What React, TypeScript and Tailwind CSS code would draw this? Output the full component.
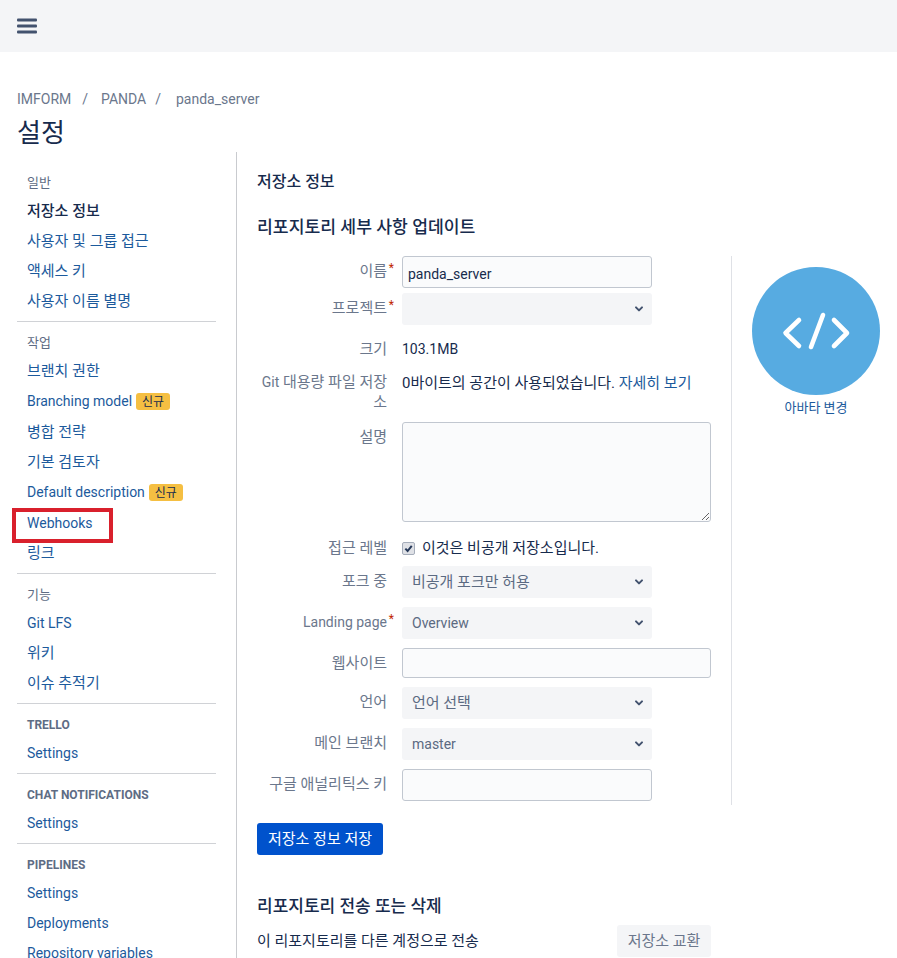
import type { ReactNode } from "react"

const sidebar = [
  { label: "일반", items: [{ name: "저장소 정보", active: true }, { name: "사용자 및 그룹 접근" }, { name: "액세스 키" }, { name: "사용자 이름 별명" }] },
  { label: "작업", items: [{ name: "브랜치 권한" }, { name: "Branching model", badge: true }, { name: "병합 전략" }, { name: "기본 검토자" }, { name: "Default description", badge: true }, { name: "Webhooks", marked: true }, { name: "링크" }] },
  { label: "기능", items: [{ name: "Git LFS" }, { name: "위키" }, { name: "이슈 추적기" }] },
  { label: "TRELLO", caps: true, items: [{ name: "Settings" }] },
  { label: "CHAT NOTIFICATIONS", caps: true, items: [{ name: "Settings" }] },
  { label: "PIPELINES", caps: true, items: [{ name: "Settings" }, { name: "Deployments" }, { name: "Repository variables" }] },
]

const isKorean = (s: string) => /[가-힣]/.test(s)

function Sidebar() {
  return (
    <nav className="w-[199px] pt-[20px] shrink-0">
      {sidebar.map((group: any, i) => (
        <div key={group.label} className={i > 0 ? "border-t border-[#d0d2d6] mt-[6px] pt-[10px]" : ""}>
          <div className={group.caps ? "h-[20px] mb-[3px] pt-[2px] pl-[10px] flex items-center text-[12px] font-bold text-[#5e6c84]" : "h-[20px] mb-[3px] pt-[2px] pl-[10px] flex items-center text-[13px] text-[#5e6c84]"}>
            {group.label}
          </div>
          {group.items.map((item: any) => (
            <div key={item.name} className={item.badge ? "relative h-[31px] pt-[2px] pl-[10px] flex items-center" : "relative h-[30px] pt-[2px] pl-[10px] flex items-center"}>
              <a className={`${isKorean(item.name) ? "text-[15px]" : "text-[14px]"} ${item.active ? "font-medium text-[#172b4d]" : "text-[#1c5a9c]"}`}>{item.name}</a>
              {item.badge && (
                <span className="ml-[4px] h-[17px] w-[34px] justify-center rounded-[3px] bg-[#f5bf42] text-[#172b4d] text-[12px] flex items-center">신규</span>
              )}
              {item.marked && <div className="absolute left-[-5px] top-[1px] w-[101px] h-[35px] border-[4px] border-[#d9202c]" />}
            </div>
          ))}
        </div>
      ))}
    </nav>
  )
}

function Row({ label, required, top, children }: { label: ReactNode; required?: boolean; top?: string; children: ReactNode }) {
  return (
    <div className={`grid grid-cols-[130px_1fr] gap-x-[15px] ${top ?? ""}`}>
      <label className="text-right text-[15px] leading-[20px] text-[#6b778c] pt-[5px] relative">
        {label}
        {required && <span className="absolute right-[-7px] top-[2px] text-[#bf2600] text-[12px]">*</span>}
      </label>
      <div>{children}</div>
    </div>
  )
}

function Select({ value }: { value: string }) {
  return (
    <div className="relative w-[250px] h-[32px] rounded-[3px] bg-[#f4f5f7]">
      <select defaultValue={value} className={`w-full h-full appearance-none bg-transparent pl-[10px] ${isKorean(value) ? "text-[15px]" : "text-[14px]"} text-[#5b6a82] outline-none`}>
        <option value={value}>{value}</option>
      </select>
      <svg className="absolute right-[8px] top-[11px] w-[10px] h-[10px]" viewBox="0 0 10 10" fill="none" stroke="#42526e" strokeWidth="2" strokeLinecap="round" strokeLinejoin="round">
        <path d="M2 3.4 5 6.4 8 3.4" />
      </svg>
    </div>
  )
}

function TextInput({ value, wide, h }: { value?: string; wide?: boolean; h: string }) {
  return (
    <input
      readOnly
      value={value ?? ""}
      className={`${wide ? "w-[309px]" : "w-[250px]"} ${h} block rounded-[3px] border border-[#c1c7d0] bg-[#fafbfc] px-[5px] pt-[3px] text-[14px] text-[#172b4d] outline-none`}
    />
  )
}

export default function App() {
  return (
    <div className="w-[897px] h-[958px] overflow-hidden bg-white font-['Roboto','Noto_Sans_CJK_KR',sans-serif] text-[#172b4d]">
      <header className="h-[52px] bg-[#f4f5f7] flex items-center pl-[17px]">
        <svg className="w-[20px] h-[16px] mb-[1px]" viewBox="0 0 20 16" fill="#42526e">
          <rect y="0.5" width="20" height="3" rx="1" />
          <rect y="6.5" width="20" height="3" rx="1" />
          <rect y="12.5" width="20" height="3" rx="1" />
        </svg>
      </header>

      <div className="pl-[17px]">
        <div className="mt-[37px] h-[20px] flex items-center text-[14px] text-[#6b778c]">
          <span>IMFORM</span>
          <span className="ml-[11px] mr-[13px]">/</span>
          <span>PANDA</span>
          <span className="ml-[9px] mr-[15px]">/</span>
          <span>panda_server</span>
        </div>
        <h1 className="mt-[8px] h-[33px] text-[26px] leading-[33px] font-normal">설정</h1>

        <div className="flex mt-[2px]">
          <Sidebar />
          <main className="ml-[20px] border-l border-[#c9cbcf] pl-[20px] w-[660px] h-[806px]">
            <h2 className="mt-[20px] h-[20px] leading-[20px] text-[16px] font-medium">저장소 정보</h2>
            <h2 className="mt-[24px] h-[22px] leading-[22px] text-[17.2px] font-medium">리포지토리 세부 사항 업데이트</h2>

            <div className="flex mt-[18px]">
              <div className="w-[475px] pb-[4px] border-r border-[#dfe1e6]">
                <Row label="이름" required>
                  <TextInput value="panda_server" h="h-[32px]" />
                </Row>
                <Row label="프로젝트" required top="mt-[5px]">
                  <Select value="" />
                </Row>
                <Row label="크기" top="mt-[9px]">
                  <div className="pt-[5px] text-[14px] leading-[20px]">103.1MB</div>
                </Row>
                <Row label={<><span className="text-[14px]">Git</span> 대용량 파일 저장소</>} top="mt-[8px]">
                  <div className="pt-[6px] text-[15px] leading-[20px] whitespace-nowrap">
                    0바이트의 공간이 사용되었습니다. <a className="text-[#1c5a9c]">자세히 보기</a>
                  </div>
                </Row>
                <Row label="설명" top="mt-[10px]">
                  <textarea readOnly className="block w-[309px] h-[100px] rounded-[3px] border border-[#c1c7d0] bg-[#fafbfc] outline-none" />
                </Row>
                <Row label="접근 레벨" top="mt-[11px]">
                  <div className="pt-[5px] flex items-center h-[25px] text-[15px]">
                    <span className="w-[13px] h-[13px] rounded-[2px] bg-[#dfe1e6] border border-[#a5adba] flex items-center justify-center">
                      <svg className="w-[9px] h-[9px]" viewBox="0 0 10 10" fill="none" stroke="#253858" strokeWidth="2.2">
                        <path d="M1.5 5.2 4 7.8 8.6 2" />
                      </svg>
                    </span>
                    <span className="ml-[7px]">이것은 비공개 저장소입니다.</span>
                  </div>
                </Row>
                <Row label="포크 중" top="mt-[8px]">
                  <Select value="비공개 포크만 허용" />
                </Row>
                <Row label={<span className="text-[14px]">Landing page</span>} required top="mt-[9px]">
                  <Select value="Overview" />
                </Row>
                <Row label="웹사이트" top="mt-[9px]">
                  <TextInput wide h="h-[30px]" />
                </Row>
                <Row label="언어" top="mt-[9px]">
                  <Select value="언어 선택" />
                </Row>
                <Row label="메인 브랜치" top="mt-[9px]">
                  <Select value="master" />
                </Row>
                <Row label="구글 애널리틱스 키" top="mt-[9px]">
                  <TextInput h="h-[32px]" />
                </Row>
              </div>
              <div className="pl-[20px] pt-[11px]">
                <div className="w-[128px] h-[128px] rounded-full bg-[#57abe1] flex items-center justify-center">
                  <svg className="w-[71px] h-[42px]" viewBox="0 0 71 42" fill="none" stroke="#fff" strokeWidth="4.6" strokeLinecap="round" strokeLinejoin="round">
                    <path d="M18 10 4.5 23 18 36" />
                    <path d="M42 5 30 37" />
                    <path d="M53 10 66 23 53 36" />
                  </svg>
                </div>
                <a className="block mt-[4px] text-center text-[13px] leading-[18px] text-[#1c5a9c]">아바타 변경</a>
              </div>
            </div>

            <button className="mt-[18px] block h-[32px] w-[126px] rounded-[3px] bg-[#0052cc] text-white text-[15px]">저장소 정보 저장</button>

            <h2 className="mt-[40px] h-[22px] leading-[22px] text-[17px] font-medium">리포지토리 전송 또는 삭제</h2>
            <div className="mt-[8px] w-[454px] flex items-center justify-between">
              <span className="text-[15px]">이 리포지토리를 다른 계정으로 전송</span>
              <button className="h-[32px] w-[94px] rounded-[3px] bg-[#f4f5f7] text-[15px] text-[#6b778c]">저장소 교환</button>
            </div>
          </main>
        </div>
      </div>
    </div>
  )
}
